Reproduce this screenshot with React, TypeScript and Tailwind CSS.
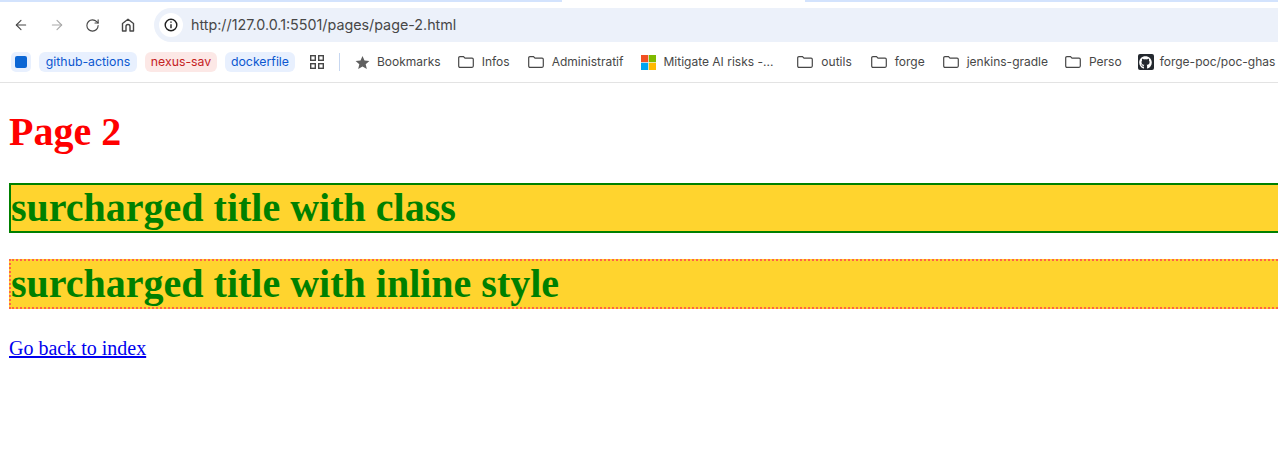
import { ArrowLeft, ArrowRight, RotateCw } from 'lucide-react';
import { FaGithub } from 'react-icons/fa';

function FolderIcon() {
  return (
    <svg width="16" height="12" viewBox="0 0 16 12" fill="none" stroke="#474747" strokeWidth="1.2" className="shrink-0">
      <path d="M.7 1.900C.7 1.200 1.200.7 1.900.7h3.600l1.500 1.500h7.100c.7 0 1.200.5 1.200 1.200v6.700c0 .7-.5 1.200-1.200 1.200H1.900C1.200 11.300.7 10.800.7 10.100Z" />
    </svg>
  );
}

function HomeIcon() {
  return (
    <svg width="14" height="14" viewBox="0 0 14 14" fill="none" stroke="#474747" strokeWidth="1.4">
      <path d="M1.500 13V5.500L7 1.200l5.500 4.300V13H9V8.500a2 2 0 0 0-4 0V13Z" strokeLinejoin="round" />
    </svg>
  );
}

function AppsIcon() {
  return (
    <svg width="14" height="14" viewBox="0 0 14 14" fill="none" stroke="#474747" strokeWidth="1.4">
      <rect x="0.700" y="0.700" width="4.600" height="4.600" />
      <rect x="8.700" y="0.700" width="4.600" height="4.600" />
      <rect x="0.700" y="8.700" width="4.600" height="4.600" />
      <rect x="8.700" y="8.700" width="4.600" height="4.600" />
    </svg>
  );
}

function MicrosoftLogo() {
  return (
    <svg width="15" height="15" viewBox="0 0 15 15" className="shrink-0">
      <rect width="7.200" height="7.200" fill="#f25022" />
      <rect x="7.800" width="7.200" height="7.200" fill="#7fba00" />
      <rect y="7.800" width="7.200" height="7.200" fill="#00a4ef" />
      <rect x="7.800" y="7.800" width="7.200" height="7.200" fill="#ffb900" />
    </svg>
  );
}

function Folder({ label, className }: { label: string; className: string }) {
  return (
    <div className={`flex shrink-0 items-center gap-2 ${className}`}>
      <FolderIcon />
      <span className="whitespace-nowrap">{label}</span>
    </div>
  );
}

export default function App() {
  return (
    <div className="h-[463px] w-[1278px] overflow-hidden bg-white font-['Liberation_Serif',serif] text-black">
      <header className="h-[83px] border-b border-[#e3e3e3] font-['Inter',sans-serif]">
        <div className="flex h-[2px]">
          <div className="w-[562px] bg-[#d3e3fd]" />
          <div className="w-[243px] bg-white" />
          <div className="flex-1 bg-[#d3e3fd]" />
        </div>

        <div className="mt-[6px] flex h-[34px] items-center">
          <ArrowLeft size={16} strokeWidth={1.6} className="ml-[13px] text-[#474747]" />
          <ArrowRight size={16} strokeWidth={1.6} className="ml-[20px] text-[#a8a8a8]" />
          <RotateCw size={15} strokeWidth={1.8} className="ml-[20px] text-[#474747]" />
          <div className="ml-[21px]">
            <HomeIcon />
          </div>
          <div className="ml-[19px] flex h-[34px] flex-1 items-center rounded-l-[17px] bg-[#ecf1fa]">
            <div className="ml-[5px] flex h-[24px] w-[24px] items-center justify-center rounded-full bg-white">
              <svg width="14" height="14" viewBox="0 0 14 14" fill="none" stroke="#1f1f1f" strokeWidth="1.400">
                <circle cx="7" cy="7" r="5.800" />
                <path d="M7 6.200v4M7 3.600v1.200" />
              </svg>
            </div>
            <span className="ml-[8px] text-[14.300px] text-[#474747]">http://127.0.0.1:5501/pages/page-2.html</span>
          </div>
        </div>

        <div className="mt-[10px] flex h-[20px] items-center overflow-hidden text-[12px] text-[#474747]">
          <div className="ml-[11px] flex h-[20px] w-[20px] shrink-0 items-center justify-center rounded-[5px] bg-[#e8f0fe]">
            <div className="h-[12px] w-[12px] rounded-[2px] bg-[#0b66d4]" />
          </div>
          <div className="ml-[8px] flex h-[20px] w-[98px] shrink-0 items-center justify-center rounded-[6px] bg-[#e8f0fe] text-[12.300px] text-[#0b57d0]">
            github-actions
          </div>
          <div className="ml-[8px] flex h-[20px] w-[72px] shrink-0 items-center justify-center rounded-[6px] bg-[#fce8e6] text-[12.300px] text-[#c5221f]">
            nexus-sav
          </div>
          <div className="ml-[8px] flex h-[20px] w-[70px] shrink-0 items-center justify-center rounded-[6px] bg-[#e8f0fe] text-[12.300px] text-[#0b57d0]">
            dockerfile
          </div>
          <div className="ml-[15px] shrink-0">
            <AppsIcon />
          </div>
          <div className="ml-[15px] h-[18px] w-px shrink-0 bg-[#c7d7f0]" />
          <svg width="15" height="15" viewBox="0 0 24 24" fill="#5f5f5f" className="ml-[15px] shrink-0">
            <path d="M12 1.500l3.200 7.300 7.800.700-5.900 5.200 1.800 7.800L12 18.400l-6.900 4.100 1.800-7.800L1 9.500l7.800-.7Z" />
          </svg>
          <span className="ml-[7px] shrink-0">Bookmarks</span>
          <Folder label="Infos" className="ml-[17px]" />
          <Folder label="Administratif" className="ml-[18px]" />
          <div className="ml-[18px] flex shrink-0 items-center gap-[7px]">
            <MicrosoftLogo />
            <span className="whitespace-nowrap">Mitigate AI risks -...</span>
          </div>
          <Folder label="outils" className="ml-[24px]" />
          <Folder label="forge" className="ml-[19px]" />
          <Folder label="jenkins-gradle" className="ml-[18px]" />
          <Folder label="Perso" className="ml-[17px]" />
          <div className="ml-[16px] flex shrink-0 items-center gap-[6px]">
            <div className="flex h-[16px] w-[16px] items-center justify-center rounded-[2px] bg-[#24292f]">
              <FaGithub size={13} className="text-white" />
            </div>
            <span className="whitespace-nowrap">forge-poc/poc-ghas</span>
          </div>
        </div>
      </header>

      <main className="pl-[9px]">
        <h1 className="mt-[26px] text-[40px] leading-[46px] font-bold text-[#ff0000]">Page 2</h1>
        <h2 className="mt-[28px] -mr-[20px] border-2 border-[#008000] bg-[#ffd42e] text-[40px] leading-[46px] font-bold text-[#008000]">
          surcharged title with class
        </h2>
        <h2 className="mt-[26px] -mr-[20px] border-2 border-dotted border-[#ff6347] bg-[#ffd42e] text-[40px] leading-[46px] font-bold text-[#008000]">
          surcharged title with inline style
        </h2>
        <a href="#" className="mt-[28px] block w-fit text-[20px] leading-[23px] text-[#0000ee] underline">
          Go back to index
        </a>
      </main>
    </div>
  );
}
